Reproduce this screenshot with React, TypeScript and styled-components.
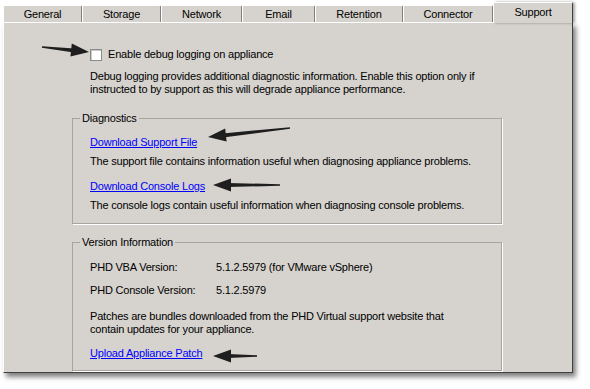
import React from 'react';
import styled, { createGlobalStyle } from 'styled-components';

const GlobalStyle = createGlobalStyle`
    body {
        margin: 0;
        background: #ffffff;
        font-family: 'Liberation Sans', Arial, sans-serif;
        font-size: 11px;
        letter-spacing: -0.2px;
        color: #000000;
    }
`;

const tabs = [
    { label: 'General', width: 79 },
    { label: 'Storage', width: 79 },
    { label: 'Network', width: 81 },
    { label: 'Email', width: 73 },
    { label: 'Retention', width: 88 },
    { label: 'Connector', width: 90 },
    { label: 'Support', width: 80, active: true },
];

type ArrowProps = { x1: number; y1: number; x2: number; y2: number };

const Arrow = ({ x1, y1, x2, y2 }: ArrowProps) => {
    const len = Math.hypot(x2 - x1, y2 - y1);
    const dx = (x2 - x1) / len;
    const dy = (y2 - y1) / len;
    const nx = -dy;
    const ny = dx;
    const head = 18;
    const half = 6.5;
    const bx = x2 - dx * head;
    const by = y2 - dy * head;
    const p = (x: number, y: number) => `${x.toFixed(1)},${y.toFixed(1)}`;
    const shaft = [
        p(x1 + nx * 0.8, y1 + ny * 0.8),
        p(bx + dx * 3 + nx * 2, by + dy * 3 + ny * 2),
        p(bx + dx * 3 - nx * 2, by + dy * 3 - ny * 2),
        p(x1 - nx * 0.8, y1 - ny * 0.8),
    ].join(' ');
    const tip = [p(x2, y2), p(bx + nx * half, by + ny * half), p(bx - nx * half, by - ny * half)].join(' ');
    return (
        <g fill="#1e1e1e">
            <polygon points={shaft} />
            <polygon points={tip} />
        </g>
    );
};

export default function App() {
    return (
        <>
            <GlobalStyle />
            <Page>
                <Frame>
                    <TabBar>
                        {tabs.map((t) => (
                            <Tab key={t.label} $width={t.width} $active={!!t.active}>
                                {t.label}
                            </Tab>
                        ))}
                    </TabBar>
                    <Panel>
                        <TopBlock>
                            <CheckRow>
                                <CheckBox />
                                <span>Enable debug logging on appliance</span>
                            </CheckRow>
                            <Hint>
                                Debug logging provides additional diagnostic information. Enable this option only if
                                <br />
                                instructed to by support as this will degrade appliance performance.
                            </Hint>
                        </TopBlock>
                        <Group>
                            <Legend>Diagnostics</Legend>
                            <GroupBody>
                                <Link href="#">Download Support File</Link>
                                <LinkNote>The support file contains information useful when diagnosing appliance problems.</LinkNote>
                                <Link href="#" $gap={12}>
                                    Download Console Logs
                                </Link>
                                <LinkNote>The console logs contain useful information when diagnosing console problems.</LinkNote>
                            </GroupBody>
                        </Group>
                        <Group $gap={12} $bottom={10}>
                            <Legend>Version Information</Legend>
                            <GroupBody>
                                <InfoRow $gap={1}>
                                    <InfoLabel>PHD VBA Version:</InfoLabel>
                                    <span>5.1.2.5979 (for VMware vSphere)</span>
                                </InfoRow>
                                <InfoRow $gap={10}>
                                    <InfoLabel>PHD Console Version:</InfoLabel>
                                    <span>5.1.2.5979</span>
                                </InfoRow>
                                <Paragraph>
                                    Patches are bundles downloaded from the PHD Virtual support website that
                                    <br />
                                    contain updates for your appliance.
                                </Paragraph>
                                <Link href="#" $gap={11}>
                                    Upload Appliance Patch
                                </Link>
                            </GroupBody>
                        </Group>
                    </Panel>
                </Frame>
                <Overlay width="590" height="389" viewBox="0 0 590 389">
                    <Arrow x1={42} y1={47} x2={89} y2={52} />
                    <Arrow x1={290} y1={128} x2={208} y2={137} />
                    <Arrow x1={280} y1={185} x2={213} y2={185} />
                    <Arrow x1={257} y1={356} x2={213} y2={356} />
                </Overlay>
            </Page>
        </>
    );
}

const Page = styled.div`
    position: relative;
    width: 590px;
    height: 389px;
    padding-left: 3px;
    box-sizing: border-box;
`;

const Frame = styled.div`
    width: 570px;
`;

const TabBar = styled.div`
    display: flex;
    align-items: flex-end;
    height: 22px;
    position: relative;
    z-index: 1;
`;

const Tab = styled.div<{ $width: number; $active: boolean }>`
    box-sizing: border-box;
    width: ${({ $width }) => $width}px;
    height: ${({ $active }) => ($active ? '21px' : '17px')};
    margin-bottom: ${({ $active }) => ($active ? '-1px' : '0')};
    display: flex;
    justify-content: center;
    align-items: ${({ $active }) => ($active ? 'flex-start' : 'center')};
    padding-top: ${({ $active }) => ($active ? '3px' : '0')};
    background: #d6d3ce;
    border-top: 1px solid #ffffff;
    border-left: 1px solid #ffffff;
    border-right: 1px solid ${({ $active }) => ($active ? '#404040' : '#808080')};
    border-top-left-radius: 2px;
    border-top-right-radius: 2px;
    box-shadow: ${({ $active }) => ($active ? '2px 0 3px rgba(0,0,0,0.35)' : 'none')};
`;

const Panel = styled.div`
    box-sizing: border-box;
    height: 351px;
    background: #d6d3ce;
    border-top: 1px solid #ffffff;
    border-left: 1px solid #ffffff;
    border-right: 1px solid #404040;
    border-bottom: 1px solid #404040;
    box-shadow: 3px 4px 5px rgba(0, 0, 0, 0.5);
    padding: 25px 0 0 68px;
`;

const TopBlock = styled.div`
    padding-left: 18px;
    display: flex;
    flex-direction: column;
    gap: 9px;
`;

const CheckRow = styled.label`
    display: flex;
    align-items: center;
    gap: 6px;
    height: 13px;
    line-height: 13px;
`;

const CheckBox = styled.span`
    display: block;
    box-sizing: border-box;
    width: 12px;
    height: 12px;
    background: #ffffff;
    border: 1px solid #8a8a8a;
    box-shadow: inset 1px 1px 0 #c8c8c8;
`;

const Hint = styled.div`
    line-height: 13px;
`;

const Group = styled.fieldset<{ $gap?: number; $bottom?: number }>`
    box-sizing: border-box;
    width: 430px;
    margin: ${({ $gap }) => $gap ?? 16}px 0 0 0;
    padding: 0 0 ${({ $bottom }) => $bottom ?? 11}px 0;
    border: 1px solid #a6a49e;
    box-shadow: 1px 1px 0 #ffffff;
`;

const Legend = styled.legend`
    margin-left: 7px;
    padding: 0 2px;
    line-height: 13px;
`;

const GroupBody = styled.div`
    display: flex;
    flex-direction: column;
    padding: 11px 0 0 17px;
    line-height: 13px;
`;

const Link = styled.a<{ $gap?: number }>`
    align-self: flex-start;
    color: #0000ff;
    text-decoration: underline;
    margin-top: ${({ $gap }) => $gap ?? 0}px;
`;

const LinkNote = styled.div`
    margin-top: 6px;
`;

const InfoRow = styled.div<{ $gap?: number }>`
    display: flex;
    margin-top: ${({ $gap }) => $gap ?? 4}px;
`;

const InfoLabel = styled.span`
    width: 126px;
`;

const Paragraph = styled.div`
    margin-top: 13px;
`;

const Overlay = styled.svg`
    position: absolute;
    left: 0;
    top: 0;
    pointer-events: none;
`;
